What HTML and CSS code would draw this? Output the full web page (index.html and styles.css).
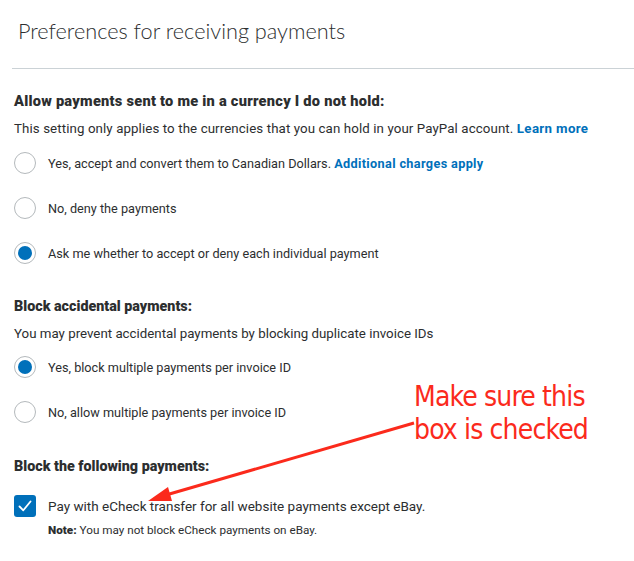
FILE: index.html
```html
<!DOCTYPE html>
<html>
<head>
<meta charset="utf-8">
<link rel="stylesheet" href="styles.css">
</head>
<body>
<div class="page">
  <h1 class="title">Preferences for receiving payments</h1>
  <hr class="rule">

  <section class="group g1">
    <h2 class="heading">Allow payments sent to me in a currency I do not hold:</h2>
    <p class="desc">This setting only applies to the currencies that you can hold in your PayPal account. <a class="link">Learn more</a></p>
    <div class="options">
      <label class="option"><span class="radio"></span><span class="label">Yes, accept and convert them to Canadian Dollars. <a class="link">Additional charges apply</a></span></label>
      <label class="option"><span class="radio"></span><span class="label">No, deny the payments</span></label>
      <label class="option"><span class="radio checked"></span><span class="label">Ask me whether to accept or deny each individual payment</span></label>
    </div>
  </section>

  <section class="group g2">
    <h2 class="heading">Block accidental payments:</h2>
    <p class="desc">You may prevent accidental payments by blocking duplicate invoice IDs</p>
    <div class="options tight">
      <label class="option"><span class="radio checked"></span><span class="label">Yes, block multiple payments per invoice ID</span></label>
      <label class="option"><span class="radio"></span><span class="label">No, allow multiple payments per invoice ID</span></label>
    </div>
  </section>

  <section class="group g3">
    <h2 class="heading">Block the following payments:</h2>
    <label class="option check-option">
      <span class="checkbox"><svg viewBox="0 0 22 22" width="22" height="22"><path d="M5.5 11.5 L9.3 15.3 L16.5 6.5" fill="none" stroke="#fff" stroke-width="1.8" stroke-linecap="round" stroke-linejoin="round"/></svg></span>
      <span class="label">Pay with eCheck transfer for all website payments except eBay.</span>
    </label>
    <p class="note"><b>Note:</b> You may not block eCheck payments on eBay.</p>
  </section>

  <div class="annotation">Make sure this<br>box is checked</div>
  <svg class="arrow" width="634" height="561" viewBox="0 0 634 561">
    <line x1="414" y1="423" x2="166" y2="495" stroke="#fb2a1c" stroke-width="3"/>
    <polygon points="148,501 168,487 172,501" fill="#fb2a1c"/>
  </svg>
</div>
</body>
</html>
```

FILE: styles.css
```css
* { box-sizing: border-box; }
html, body { margin: 0; padding: 0; background: #fff; }
body { font-family: Roboto, "Liberation Sans", sans-serif; color: #2c2e2f; }
.page { position: relative; width: 634px; height: 561px; overflow: hidden; }
.title {
  margin: 0;
  padding: 18px 0 0 18px;
  height: 68px;
  font-family: Lato, "Open Sans", sans-serif;
  font-weight: 300;
  font-size: 21.7px;
  color: #2c2e2f;
}
.rule { margin: 0 0 0 12px; border: 0; border-top: 1px solid #cbd2d6; height: 0; }
.group { padding-left: 14px; }
.heading { margin: 0; font-size: 14.3px; font-weight: 900; line-height: 18px; color: #2c2e2f; }
.g1 .heading { margin-top: 23px; font-size: 14.6px; letter-spacing: 0.25px; }
.desc { margin: 10px 0 0; font-size: 13.3px; line-height: 18px; }
.g1 .desc { letter-spacing: 0.1px; }
.link { color: #0070ba; font-weight: 700; text-decoration: none; letter-spacing: 0.35px; }
.options { display: flex; flex-direction: column; gap: 23px; margin-top: 14px; }
.options.tight { margin-top: 13px; }
.option { display: flex; align-items: center; gap: 12px; font-size: 12.7px; height: 22px; }
.radio {
  width: 22px; height: 22px; border-radius: 50%;
  border: 1px solid #b4b9bc; flex: none;
  display: flex; align-items: center; justify-content: center;
}
.radio.checked::after { content: ""; width: 14px; height: 14px; border-radius: 50%; background: #0070ba; }
.g2 .heading { margin-top: 33px; }
.g3 .heading { margin-top: 34px; }
.check-option { margin-top: 20px; font-size: 13.5px; }
.checkbox { width: 22px; height: 22px; border-radius: 3px; background: #0070ba; flex: none; display: flex; }
.note { margin: 6px 0 0 34px; font-size: 11.7px; line-height: 14px; }
.note b { font-weight: 900; }
.annotation {
  position: absolute; left: 414px; top: 380px;
  font-family: "DejaVu Sans Condensed", "DejaVu Sans", sans-serif;
  font-size: 28px; line-height: 33px; color: #fb2a1c; letter-spacing: -0.85px;
}
.arrow { position: absolute; left: 0; top: 0; pointer-events: none; }
```
